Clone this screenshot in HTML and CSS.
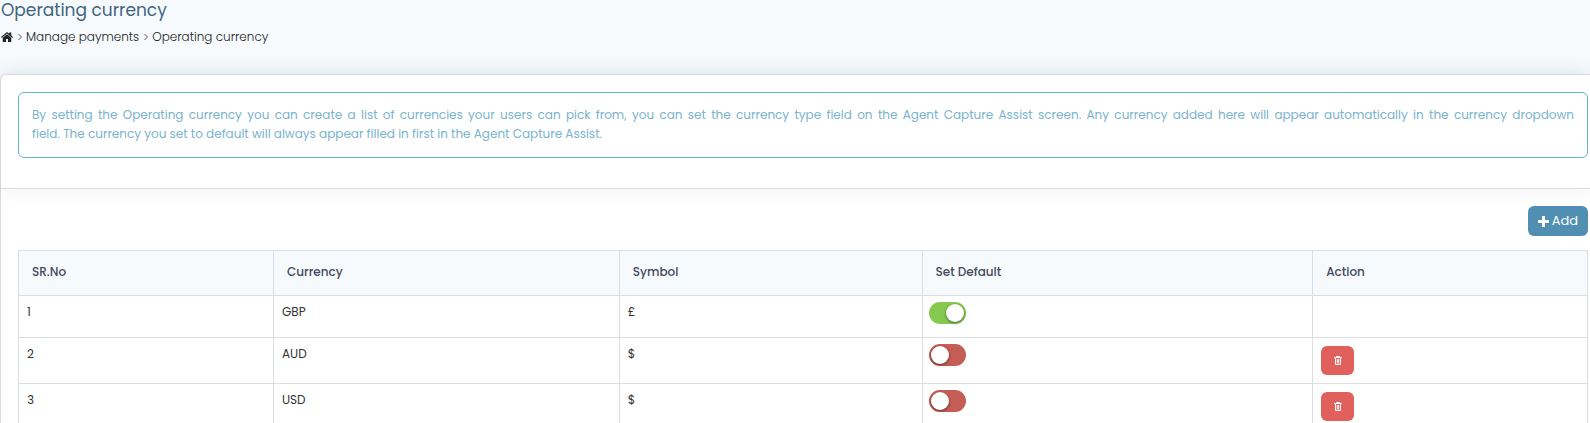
FILE: index.html
```html
<!DOCTYPE html>
<html lang="en">
<head>
    <meta charset="UTF-8">
    <meta name="viewport" content="width=device-width, initial-scale=1.0">
    <title>Operating currency</title>
    <link rel="stylesheet" href="styles.css">
</head>
<body>

    <header class="page-header">
        <h1>Operating currency</h1>
        <nav class="breadcrumb" aria-label="Breadcrumb">
            <a href="#" aria-label="Home">
                <svg class="home-icon" viewBox="0 0 24 20" aria-hidden="true">
                    <path d="M12 0 0 10l1.500 1.800L12 3.200l10.500 8.600L24 10l-3.500-3V1h-4v2.700z"/>
                    <path d="M12 4.500 3.500 11.500V20H10v-6h4v6h6.500v-8.500z"/>
                </svg>
            </a>
            <svg class="chevron" viewBox="0 0 4 8" aria-hidden="true"><path d="M.5 1 3.500 4 .5 7"/></svg>
            <a href="#">Manage payments</a>
            <svg class="chevron" viewBox="0 0 4 8" aria-hidden="true"><path d="M.5 1 3.500 4 .5 7"/></svg>
            <span>Operating currency</span>
        </nav>
    </header>

    <main class="card">
        <div class="card-header">
            <p class="info">By setting the Operating currency you can create a list of currencies your users can pick from, you can set the currency type field on the Agent Capture Assist screen. Any currency added here will appear automatically in the currency dropdown <span class="nowrap">field. The currency</span> you set to default will always appear filled in first in the Agent Capture Assist.</p>
        </div>
        <div class="card-body">
            <div class="toolbar">
                <button type="button" class="btn btn-add">
                    <svg viewBox="0 0 11 11" aria-hidden="true"><path d="M4 0h3v4h4v3H7v4H4V7H0V4h4z"/></svg>
                    Add
                </button>
            </div>
            <table>
                <colgroup>
                    <col class="col-no">
                    <col class="col-currency">
                    <col class="col-symbol">
                    <col class="col-default">
                    <col>
                </colgroup>
                <thead>
                    <tr>
                        <th>SR.No</th>
                        <th>Currency</th>
                        <th>Symbol</th>
                        <th>Set Default</th>
                        <th>Action</th>
                    </tr>
                </thead>
                <tbody>
                    <tr>
                        <td>1</td>
                        <td>GBP</td>
                        <td>£</td>
                        <td class="cell-switch"><input type="checkbox" class="switch" aria-label="Set GBP as default" checked></td>
                        <td></td>
                    </tr>
                    <tr>
                        <td>2</td>
                        <td>AUD</td>
                        <td>$</td>
                        <td class="cell-switch"><input type="checkbox" class="switch" aria-label="Set AUD as default"></td>
                        <td>
                            <button type="button" class="btn btn-delete" aria-label="Delete AUD">
                                <svg viewBox="0 0 8 9" aria-hidden="true"><path d="M0 1.500h8M2.500 1.500v-1h3v1M1.500 2v6.500h5V2M3.300 3v4.500M4.700 3v4.500"/></svg>
                            </button>
                        </td>
                    </tr>
                    <tr>
                        <td>3</td>
                        <td>USD</td>
                        <td>$</td>
                        <td class="cell-switch"><input type="checkbox" class="switch" aria-label="Set USD as default"></td>
                        <td>
                            <button type="button" class="btn btn-delete" aria-label="Delete USD">
                                <svg viewBox="0 0 8 9" aria-hidden="true"><path d="M0 1.500h8M2.500 1.500v-1h3v1M1.500 2v6.500h5V2M3.300 3v4.500M4.700 3v4.500"/></svg>
                            </button>
                        </td>
                    </tr>
                </tbody>
            </table>
        </div>
    </main>

</body>
</html>
```
FILE: styles.css
```css
* {
    box-sizing: border-box;
}
body {
    font-family: Poppins, Inter, "Liberation Sans", sans-serif;
    font-size: 12px;
    color: #333;
    background-color: #f6fafd;
    margin: 0;
    height: 100vh;
    overflow: hidden;
}
.page-header {
    padding-left: 1px;
    height: 74px;
}
h1 {
    margin: 0;
    font-size: 17px;
    line-height: 20px;
    font-weight: 400;
    color: #41657e;
}
.breadcrumb {
    display: flex;
    align-items: center;
    gap: 4px;
    margin-top: 8px;
    line-height: 18px;
    font-weight: 300;
    color: #222;
}
.breadcrumb a {
    color: #222;
    text-decoration: none;
}
.home-icon {
    display: block;
    width: 12px;
    height: 10px;
    fill: #222;
}
.chevron {
    width: 4px;
    height: 8px;
    margin-left: 1px;
    fill: none;
    stroke: #555;
}
.card {
    background-color: #fff;
    border: 1px solid #d9dbde;
    border-right: none;
    border-top-left-radius: 6px;
    box-shadow: 0 0 20px rgba(60, 80, 110, 0.12);
}
.card-header {
    padding: 17px 2px 30px 17px;
    border-bottom: 1px solid #d9dbde;
    box-shadow: 0 5px 15px rgba(0, 0, 0, 0.04);
}
.info {
    margin: 0;
    padding: 12px 13px 14px;
    border: 1px solid #63b5cd;
    border-radius: 6px;
    color: #7ab3cd;
    font-size: 12px;
    line-height: 19px;
    text-align: justify;
}
.nowrap {
    white-space: nowrap;
}
.card-body {
    padding: 17px 2px 17px 17px;
}
.toolbar {
    display: flex;
    justify-content: flex-end;
    margin-bottom: 14px;
}
.btn {
    display: flex;
    align-items: center;
    justify-content: center;
    border: none;
    border-radius: 6px;
    font-family: inherit;
    color: #fff;
    cursor: pointer;
}
.btn-add {
    gap: 3px;
    height: 30px;
    padding: 0 10px;
    background-color: #508fb1;
    font-size: 13px;
}
.btn-add svg {
    width: 11px;
    height: 11px;
    fill: #fff;
}
table {
    width: 100%;
    table-layout: fixed;
    border-collapse: collapse;
}
.col-no {
    width: 16.25%;
}
.col-currency {
    width: 22.04%;
}
.col-symbol {
    width: 19.3%;
}
.col-default {
    width: 24.9%;
}
th, td {
    border: 1px solid #dcdfe2;
    text-align: left;
}
th {
    height: 45px;
    padding: 0 13px 2px;
    background-color: #f6fafd;
    font-weight: 500;
    color: #444a5c;
}
td {
    height: 42px;
    padding: 8px;
    line-height: 16px;
    vertical-align: top;
}
.cell-switch {
    padding: 6px;
}
.switch {
    appearance: none;
    display: block;
    width: 37px;
    height: 22px;
    margin: 0;
    padding: 2px;
    border-radius: 11px;
    background-color: #c45d55;
    cursor: pointer;
}
.switch::before {
    content: "";
    display: block;
    width: 18px;
    height: 18px;
    border-radius: 50%;
    background-color: #fff;
    box-shadow: 0 1px 3px rgba(0, 0, 0, 0.5);
}
.switch:checked {
    background-color: #86c950;
}
.switch:checked::before {
    margin-left: auto;
}
.btn-delete {
    width: 33px;
    height: 29px;
    background-color: #e1605b;
}
.btn-delete svg {
    width: 8px;
    height: 9px;
    fill: none;
    stroke: #fff;
}
```
